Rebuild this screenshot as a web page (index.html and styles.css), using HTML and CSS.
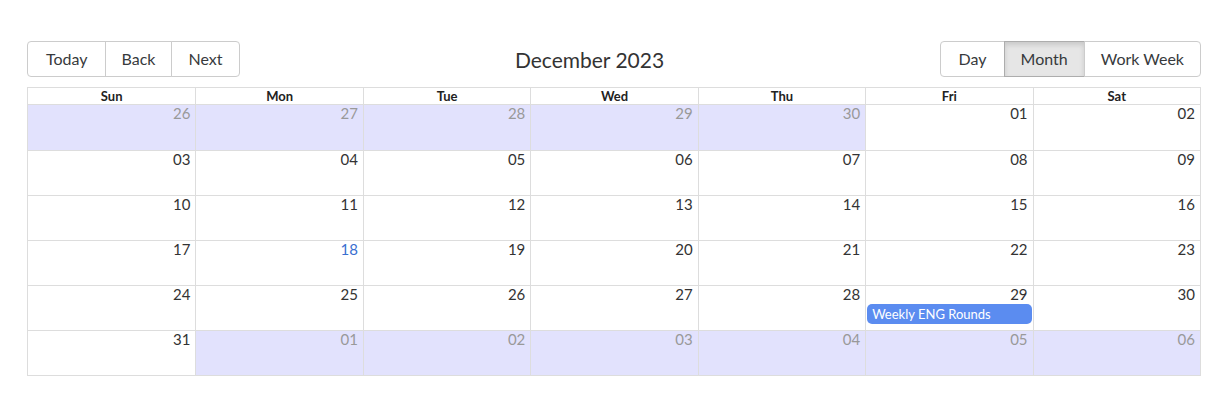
FILE: index.html
```html
<!DOCTYPE html>
<html lang="en">
<head>
  <meta charset="UTF-8" />
  <meta name="viewport" content="width=device-width, initial-scale=1.0" />
  <title>Calendar</title>
  <link rel="stylesheet" href="styles.css">
</head>
<body>
  <div class="calendar">
    <div class="toolbar">
      <span class="btn-group">
        <button type="button">Today</button>
        <button type="button">Back</button>
        <button type="button">Next</button>
      </span>
      <span class="toolbar-label">December 2023</span>
      <span class="btn-group">
        <button type="button">Day</button>
        <button type="button" class="active">Month</button>
        <button type="button">Work Week</button>
      </span>
    </div>

    <div class="month-view">
      <div class="month-header">
        <div class="header">Sun</div>
        <div class="header">Mon</div>
        <div class="header">Tue</div>
        <div class="header">Wed</div>
        <div class="header">Thu</div>
        <div class="header">Fri</div>
        <div class="header">Sat</div>
      </div>

      <div class="month-row">
        <div class="day off-range"><span class="date">26</span></div>
        <div class="day off-range"><span class="date">27</span></div>
        <div class="day off-range"><span class="date">28</span></div>
        <div class="day off-range"><span class="date">29</span></div>
        <div class="day off-range"><span class="date">30</span></div>
        <div class="day"><span class="date">01</span></div>
        <div class="day"><span class="date">02</span></div>
      </div>
      <div class="month-row">
        <div class="day"><span class="date">03</span></div>
        <div class="day"><span class="date">04</span></div>
        <div class="day"><span class="date">05</span></div>
        <div class="day"><span class="date">06</span></div>
        <div class="day"><span class="date">07</span></div>
        <div class="day"><span class="date">08</span></div>
        <div class="day"><span class="date">09</span></div>
      </div>
      <div class="month-row">
        <div class="day"><span class="date">10</span></div>
        <div class="day"><span class="date">11</span></div>
        <div class="day"><span class="date">12</span></div>
        <div class="day"><span class="date">13</span></div>
        <div class="day"><span class="date">14</span></div>
        <div class="day"><span class="date">15</span></div>
        <div class="day"><span class="date">16</span></div>
      </div>
      <div class="month-row">
        <div class="day"><span class="date">17</span></div>
        <div class="day today"><span class="date">18</span></div>
        <div class="day"><span class="date">19</span></div>
        <div class="day"><span class="date">20</span></div>
        <div class="day"><span class="date">21</span></div>
        <div class="day"><span class="date">22</span></div>
        <div class="day"><span class="date">23</span></div>
      </div>
      <div class="month-row">
        <div class="day"><span class="date">24</span></div>
        <div class="day"><span class="date">25</span></div>
        <div class="day"><span class="date">26</span></div>
        <div class="day"><span class="date">27</span></div>
        <div class="day"><span class="date">28</span></div>
        <div class="day">
          <span class="date">29</span>
          <div class="event">Weekly ENG Rounds</div>
        </div>
        <div class="day"><span class="date">30</span></div>
      </div>
      <div class="month-row">
        <div class="day"><span class="date">31</span></div>
        <div class="day off-range"><span class="date">01</span></div>
        <div class="day off-range"><span class="date">02</span></div>
        <div class="day off-range"><span class="date">03</span></div>
        <div class="day off-range"><span class="date">04</span></div>
        <div class="day off-range"><span class="date">05</span></div>
        <div class="day off-range"><span class="date">06</span></div>
      </div>
    </div>
  </div>
</body>
</html>
```

FILE: styles.css
```css
body {
  margin: 0;
  padding: 41px 22px 0 27px;
  font-family: Lato, "Open Sans", "Liberation Sans", sans-serif;
  color: #373a3c;
  background: #fff;
}

.calendar {
  width: 1174px;
}

.toolbar {
  display: flex;
  align-items: center;
  margin-bottom: 10px;
}

.toolbar-label {
  flex: 1;
  text-align: center;
  font-size: 21px;
  color: #333;
}

.btn-group {
  display: inline-flex;
}

.btn-group button {
  font-family: inherit;
  font-size: 16px;
  color: #373a3c;
  background: #fff;
  border: 1px solid #ccc;
  margin: 0;
  padding: 0 16px;
  height: 36px;
  line-height: 34px;
  cursor: pointer;
}

.btn-group button:first-child {
  padding: 0 17px 0 18px;
}

.btn-group button + button {
  margin-left: -1px;
}

.btn-group button:first-child {
  border-radius: 4px 0 0 4px;
}

.btn-group button:last-child {
  border-radius: 0 4px 4px 0;
}

.btn-group button.active {
  background: #e6e6e6;
  border-color: #adadad;
  box-shadow: inset 0 3px 5px rgba(0, 0, 0, 0.125);
}

.month-view {
  border: 1px solid #ddd;
}

.month-header,
.month-row {
  display: grid;
  grid-template-columns: repeat(7, 1fr);
}

.header {
  font-size: 13px;
  font-weight: bold;
  text-align: center;
  color: #222;
  height: 16px;
  line-height: 16px;
  border-bottom: 1px solid #ddd;
}

.header + .header {
  border-left: 1px solid #ddd;
}

.month-row {
  box-sizing: border-box;
  height: 45px;
}

.month-row + .month-row {
  border-top: 1px solid #ddd;
}

.day {
  display: flex;
  flex-direction: column;
  min-width: 0;
}

.day + .day {
  border-left: 1px solid #ddd;
}

.date {
  text-align: right;
  font-size: 15px;
  line-height: 17px;
  padding-right: 5px;
  color: #333;
}

.off-range {
  background: #e2e2fd;
}

.off-range .date {
  color: #999;
}

.today .date {
  color: #3a6fd0;
}

.event {
  margin: 1px 1px 0;
  padding: 0 5px;
  height: 20px;
  line-height: 20px;
  font-size: 13px;
  color: #fff;
  background: #5b8cf0;
  border-radius: 5px;
  white-space: nowrap;
  overflow: hidden;
}
```
